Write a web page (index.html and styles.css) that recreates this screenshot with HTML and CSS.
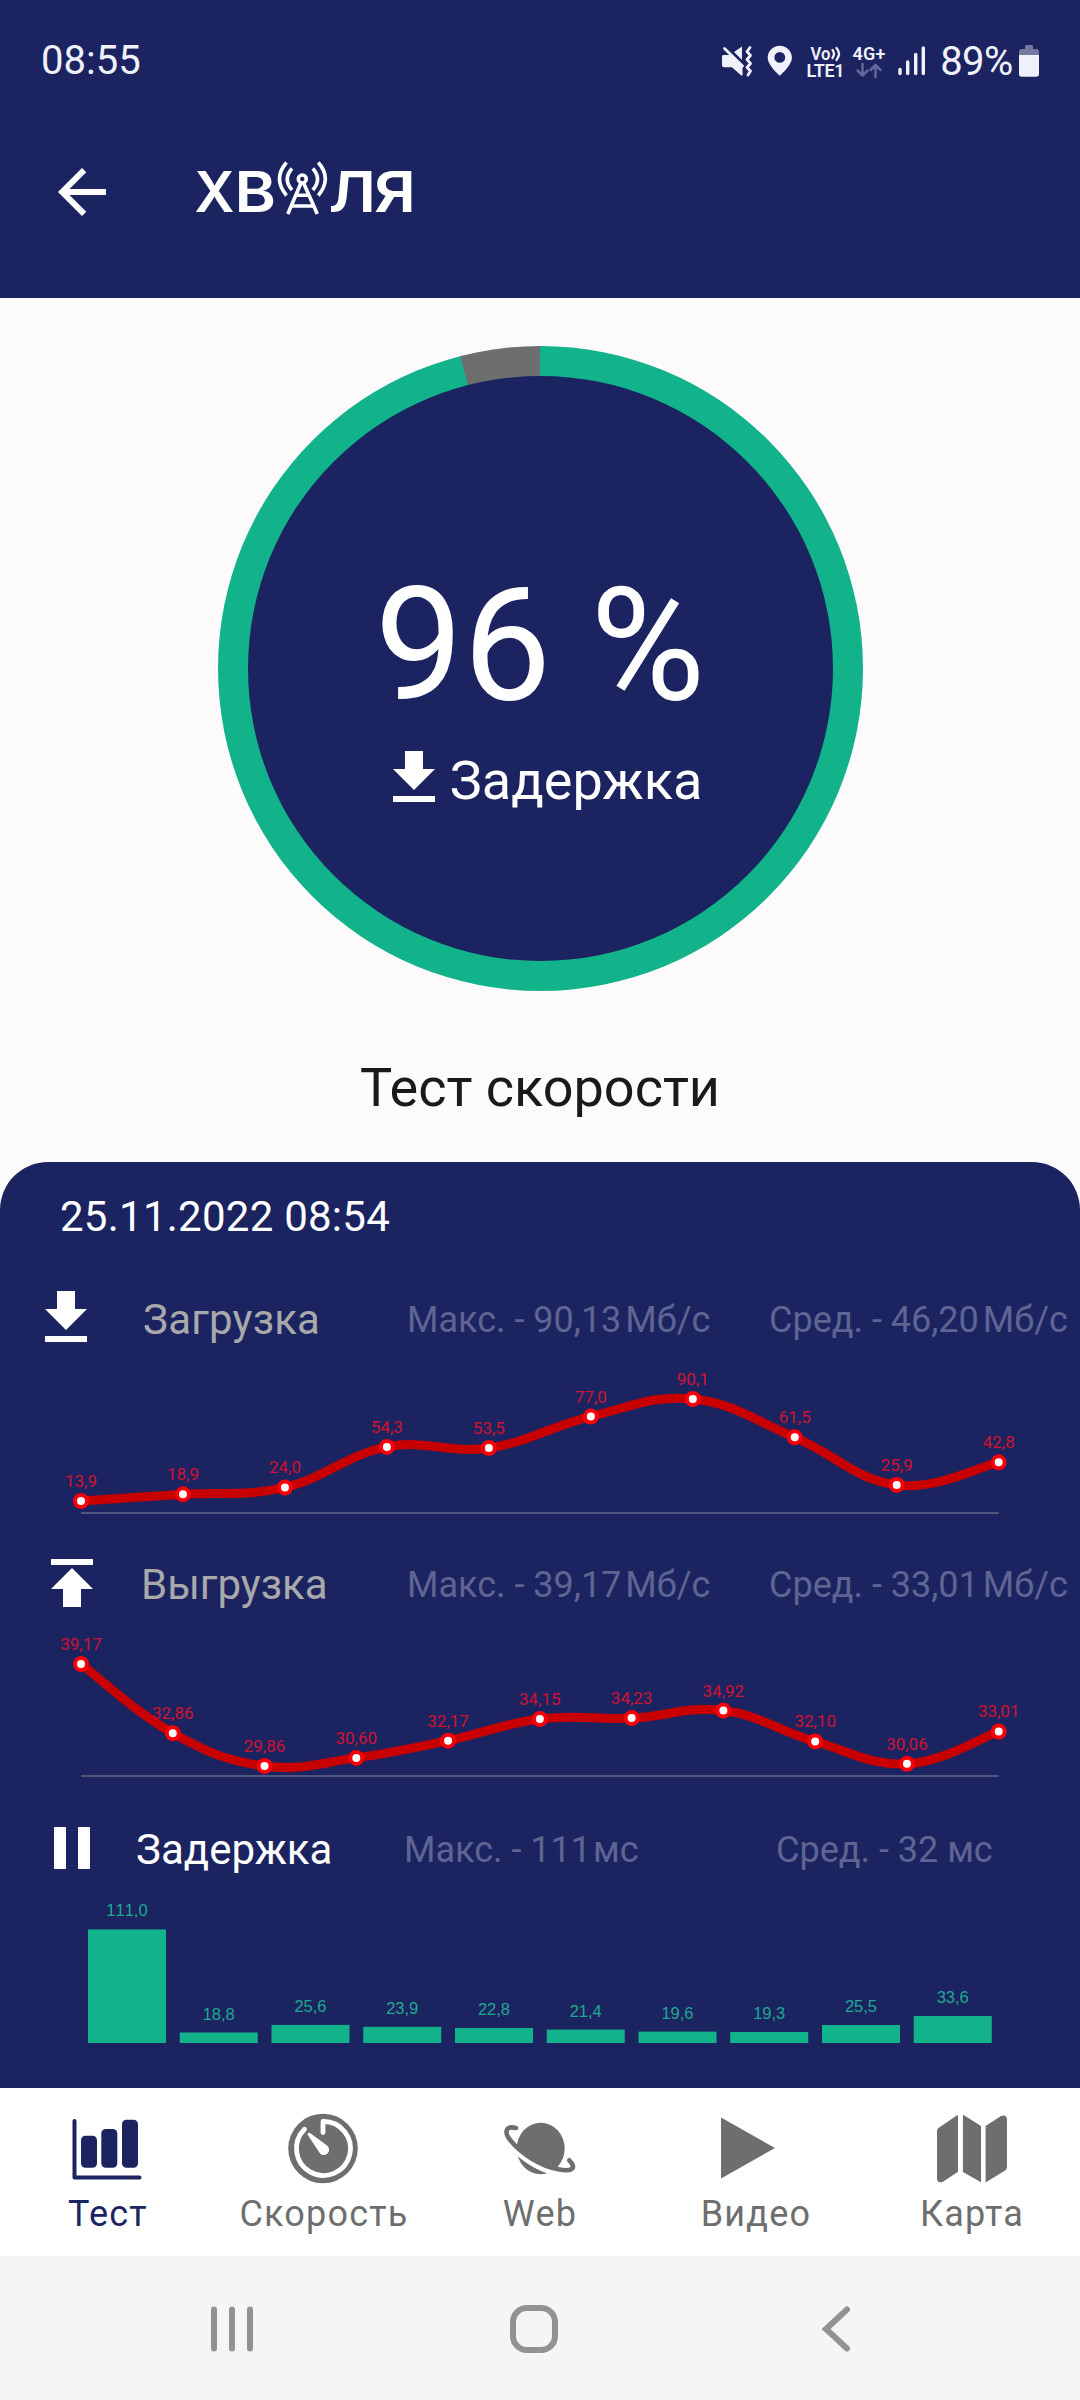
FILE: index.html
```html
<!DOCTYPE html>
<html lang="ru">
<head>
    <meta charset="UTF-8">
    <title>Хваля - Тест скорости</title>
    <link rel="stylesheet" href="styles.css">
</head>
<body>
    <header>
        <div class="status-bar">
            <span class="clock">08:55</span>
            <svg class="status-icons" viewBox="716 34 330 54" width="330" height="54">
                <!-- sound off -->
                <path d="M722 57q0-2 2-2h3l16 20v.3l-10-8h-9q-2 0-2-2zM734 52l8-5.500v13.500z" />
                <path d="M722 57v6q0 3 3 3h5.500l10.500 9.300q1.500.7 1.500-1V66l-13-11h-5.500q-2 0-2 2z" />
                <path d="M724.500 48.500l18 17.500" class="line" stroke-width="2.800" />
                <path d="M750 47.500l-3 4 3.500 4-3.500 4 3.500 4-3.500 4 3.500 3.500-2.500 4" class="line" stroke-width="2.800" />
                <!-- location -->
                <path fill-rule="evenodd" d="M779.800 45.700c-6.700 0-12.100 5.200-12.100 11.900 0 8.200 12.100 18.100 12.100 18.100s12.100-9.900 12.100-18.100c0-6.700-5.400-11.900-12.100-11.900zm0 6.300a5.400 5.400 0 1 1 0 10.800a5.400 5.400 0 1 1 0-10.800z" />
                <text x="810.500" y="59.500" class="tiny" textLength="20" lengthAdjust="spacingAndGlyphs">Vo</text>
                <path d="M832.500 50q3 3.500 0 8M836.500 48q5 5.500 0 12" class="line" stroke-width="2.300" />
                <text x="806.500" y="76.500" class="tiny" textLength="38">LTE1</text>
                <text x="852.500" y="60" class="tiny" textLength="33">4G+</text>
                <path d="M862.500 64v11M857.500 70.500l5 5 5-5M875.500 77V65.500M870.500 70l5-5 5 5" class="line dim" stroke-width="2.500" />
                <path d="M900 69.500v4M907.700 62v11.500M915.700 54.500v19M923.300 48v25.500" class="line" stroke-width="3.400" />
                <text x="940.200" y="74.700" class="percent" textLength="73">89%</text>
                <path class="dim-fill" d="M1025 46.500q0-1.500 1.500-1.500h5q1.500 0 1.500 1.500V49h3.500q2.500 0 2.500 2.500V56h-20v-4.500q0-2.500 2.500-2.500h3.500z" />
                <path d="M1019 55h20v19q0 2.700-2.700 2.700h-14.600q-2.700 0-2.700-2.700z" />
            </svg>
        </div>
        <div class="app-bar">
            <svg class="icon" viewBox="0 0 24 24"><path d="M20 11H7.830l5.590-5.590L12 4l-8 8 8 8 1.410-1.410L7.830 13H20v-2z" /></svg>
            <svg class="logo" viewBox="190 156 230 72" width="230" height="72">
                <text x="194.500" y="212" textLength="40" lengthAdjust="spacingAndGlyphs">Х</text>
                <text x="234.500" y="212" textLength="41.500" lengthAdjust="spacingAndGlyphs">В</text>
                <text x="328.500" y="212" textLength="47.500" lengthAdjust="spacingAndGlyphs">Л</text>
                <text x="374" y="212" textLength="42" lengthAdjust="spacingAndGlyphs">Я</text>
                <g class="tower">
                    <circle cx="302.300" cy="179" r="4" />
                    <path d="M300.800 183.500L287.800 214M303.800 183.500L317.300 214M297 195.300h11M291.500 206h22" />
                    <path d="M292 168.500q-9.500 10.500 0 21.500M286.500 162.500q-14 16 0 33M312.800 168.500q9.500 10.500 0 21.500M318.300 162.500q14 16 0 33" />
                </g>
            </svg>
        </div>
    </header>

    <main>
        <div class="gauge">
            <div class="gauge-inner">
                <div class="gauge-value">96 %</div>
                <div class="gauge-label">
                    <svg class="icon" viewBox="0 0 24 24"><path d="M19 9h-4V3H9v6H5l7 7 7-7zM5 18v2h14v-2H5z" /></svg>
                    <span>Задержка</span>
                </div>
            </div>
        </div>
        <h1>Тест скорости</h1>
    </main>

    <section class="results">
        <div class="date">25.11.2022 08:54</div>

        <div class="row download">
            <svg class="icon" viewBox="0 0 24 24"><path d="M19 9h-4V3H9v6H5l7 7 7-7zM5 18v2h14v-2H5z" /></svg>
            <span class="name">Загрузка</span>
            <span class="stat">Макс. - 90,13<span class="unit">Мб/с</span></span>
            <span class="stat">Сред. - 46,20<span class="unit">Мб/с</span></span>
        </div>
        <svg class="chart" id="downloadChart" width="1080" height="193"></svg>

        <div class="row upload">
            <svg class="icon" viewBox="0 0 24 24"><path d="M5 4v2h14V4H5zm0 10h4v6h6v-6h4l-7-7-7 7z" /></svg>
            <span class="name">Выгрузка</span>
            <span class="stat">Макс. - 39,17<span class="unit">Мб/с</span></span>
            <span class="stat">Сред. - 33,01<span class="unit">Мб/с</span></span>
        </div>
        <svg class="chart" id="uploadChart" width="1080" height="193"></svg>

        <div class="row delay">
            <svg class="icon" viewBox="0 0 24 24"><path d="M6 19h4V5H6v14zm8-14v14h4V5h-4z" /></svg>
            <span class="name">Задержка</span>
            <span class="stat">Макс. - 111<span class="unit">мс</span></span>
            <span class="stat">Сред. - 32 мс</span>
        </div>
        <svg class="chart" id="delayChart" width="1080" height="204"></svg>
    </section>

    <nav class="tabs">
        <a class="tab active">
            <svg viewBox="0 0 72 72" width="72" height="72">
                <path d="M2.500 9v56.500h65" fill="none" stroke="currentColor" stroke-width="4" stroke-linecap="round" stroke-linejoin="round" />
                <rect x="9" y="23.700" width="16" height="32" rx="4.500" />
                <rect x="29.300" y="17" width="16" height="38.700" rx="4.500" />
                <rect x="50" y="7.700" width="16" height="48" rx="4.500" />
            </svg>
            <span>Тест</span>
        </a>
        <a class="tab">
            <svg viewBox="0 0 72 72" width="72" height="72">
                <circle cx="35" cy="36.500" r="34.800" />
                <path d="M35 20.500V9.500a27 27 0 1 1-18.500 7.800" fill="none" stroke="#fff" stroke-width="4.800" stroke-linecap="round" stroke-linejoin="round" />
                <path d="M19.500 22.500q0-2.500 2.500-1.500l17 12.500a5.300 5.300 0 1 1-8 6.500z" fill="#fff" />
            </svg>
            <span>Скорость</span>
        </a>
        <a class="tab">
            <svg viewBox="0 0 72 72" width="72" height="72">
                <ellipse cx="36.700" cy="36.500" rx="24" ry="25.800" />
                <path d="M8 35.500C20 48 35 57 52 61.500" fill="none" stroke="#fff" stroke-width="5" />
                <path d="M12 16C1 13.300 0 20.700 6.700 28.700C16 40.700 36 54 54.300 57.300C67.700 60 73.300 56.300 65.300 48.300" fill="none" stroke="currentColor" stroke-width="4.600" stroke-linecap="round" />
            </svg>
            <span>Web</span>
        </a>
        <a class="tab">
            <svg viewBox="0 0 72 72" width="72" height="72"><path d="M1 5.500L55 36L1 66.500z" /></svg>
            <span>Видео</span>
        </a>
        <a class="tab">
            <svg viewBox="0 0 72 72" width="72" height="72">
                <path d="M1 19q0-2 1.500-3L20 4q2-1.500 2 .5v55.200L7 69.800q-6 2-6-3.800z" />
                <path d="M26.900 4q0-1.500 1.500-.5L45 14v56.200L26.900 60z" />
                <path d="M49.600 14L65 4q6-2 6 4v47q0 2-2 3.500L49.600 70.500z" />
            </svg>
            <span>Карта</span>
        </a>
    </nav>

    <footer>
        <svg viewBox="0 0 54 54" width="54" height="54"><path d="M9 7.500v39M27 7.500v39M45 7.500v39" /></svg>
        <svg viewBox="0 0 54 54" width="54" height="54"><rect x="6" y="6" width="42" height="42" rx="14" /></svg>
        <svg viewBox="0 0 54 54" width="54" height="54"><path d="M38 7.500L17 27L38 46.500" /></svg>
    </footer>

    <script src="charts.js"></script>
</body>
</html>
```

FILE: styles.css
```css
body {
    margin: 0;
    width: 1080px;
    font-family: Roboto, sans-serif;
    background: #fcfafb;
    color: #fff;
}
.icon {
    width: 72px;
    height: 72px;
    fill: #fff;
    flex: none;
}
header {
    height: 298px;
    background: #1b2461;
}
.status-bar {
    display: flex;
    justify-content: space-between;
    align-items: center;
    height: 121px;
    padding: 0 34px 0 41px;
}
.clock {
    font-size: 40px;
    color: #f0f1fa;
}
.status-icons {
    fill: #f0f1fa;
}
.status-icons .line {
    fill: none;
    stroke: #f0f1fa;
    stroke-linecap: round;
    stroke-linejoin: round;
}
.status-icons .dim {
    stroke: #62689a;
}
.status-icons .dim-fill {
    fill: #7479a4;
}
.tiny {
    font-size: 18px;
    font-weight: 600;
}
.percent {
    font-size: 40px;
}
.app-bar {
    display: flex;
    gap: 72px;
    padding: 35px 46px;
}
.logo text {
    font-family: Inter, sans-serif;
    font-size: 56px;
    font-weight: 600;
    fill: #fff;
}
.tower {
    fill: none;
    stroke: #fff;
    stroke-width: 3.600;
}
main {
    display: flex;
    flex-direction: column;
    align-items: center;
    box-sizing: border-box;
    height: 864px;
    padding-top: 48px;
}
.gauge {
    box-sizing: border-box;
    width: 645px;
    height: 645px;
    padding: 30px;
    border-radius: 50%;
    background: conic-gradient(#12b28a 0 96%, #6e6e6e 96% 100%);
}
.gauge-inner {
    display: flex;
    flex-direction: column;
    align-items: center;
    box-sizing: border-box;
    height: 585px;
    padding-top: 191px;
    border-radius: 50%;
    background: #1b2461;
}
.gauge-value {
    font-size: 157px;
    line-height: 157px;
}
.gauge-label {
    display: flex;
    align-items: center;
    margin-top: 17px;
    font-size: 54px;
    line-height: 66px;
}
.gauge-label span {
    padding-top: 7px;
}
h1 {
    margin: 65px 0 0;
    font-size: 54px;
    font-weight: 400;
    line-height: 64px;
    color: #1a1a1c;
}
.results {
    box-sizing: border-box;
    height: 926px;
    padding-top: 30px;
    border-radius: 48px 48px 0 0;
    background: #1b2461;
}
.date {
    height: 90px;
    padding-left: 60px;
    font-size: 42px;
    line-height: 50px;
    letter-spacing: 0.250px;
}
.row {
    display: grid;
    grid-template-columns: 105px 266px 362px 1fr;
    align-items: center;
    height: 72px;
    padding-left: 36px;
    white-space: nowrap;
}
.row.download {
    grid-template-columns: 113px 264px 362px 1fr;
    padding-left: 30px;
}
.row.delay {
    grid-template-columns: 100px 268px 372px 1fr;
}
.name {
    padding-top: 3px;
    font-size: 42px;
    color: #a9a9ab;
}
.download .name {
    letter-spacing: 0.200px;
}
.delay .name {
    color: #fff;
}
.stat {
    padding-top: 4px;
    font-size: 36px;
    color: #5f6592;
}
.unit {
    margin-left: 4px;
}
.delay .unit {
    margin-left: 2px;
}
.chart {
    display: block;
}
.axis {
    stroke: #51567f;
    stroke-width: 2;
}
.curve {
    fill: none;
    stroke: #c80000;
    stroke-width: 9;
}
.dot {
    fill: #fff;
    stroke: #f8000a;
    stroke-width: 4;
}
.value {
    font-size: 17px;
    text-anchor: middle;
    fill: #cf1230;
}
.bar {
    fill: #12b28a;
}
.bar-value {
    font-family: "Liberation Sans", Arial, sans-serif;
    font-size: 16.500px;
    font-kerning: none;
    text-anchor: middle;
    fill: #1faa8f;
}
.tabs {
    display: grid;
    grid-template-columns: repeat(5, 1fr);
    height: 168px;
    background: #fff;
}
.tab {
    display: flex;
    flex-direction: column;
    align-items: center;
    padding-top: 24px;
    font-size: 36px;
    line-height: 42px;
    letter-spacing: 1.200px;
    color: #6e6e6e;
    fill: currentColor;
}
.tab.active {
    color: #1b2461;
}
.tab span {
    margin-top: 9px;
}
footer {
    display: flex;
    gap: 248px;
    box-sizing: border-box;
    height: 144px;
    padding: 46px 0 0 205px;
    background: #f5f5f5;
}
footer svg {
    fill: none;
    stroke: #929292;
    stroke-width: 6;
    stroke-linecap: round;
}
```

FILE: charts.js
```js
var NS = 'http://www.w3.org/2000/svg';
var LEFT = 81;
var RIGHT = 998.7;

function add(svg, tag, attrs, text) {
    var el = document.createElementNS(NS, tag);
    for (var key in attrs) {
        el.setAttribute(key, attrs[key]);
    }
    if (text) {
        el.textContent = text;
    }
    svg.appendChild(el);
}

function format(value, digits) {
    return value.toFixed(digits).replace('.', ',');
}

function lineChart(id, values, digits, axisY) {
    var svg = document.getElementById(id);
    var min = Math.min.apply(null, values);
    var max = Math.max.apply(null, values);
    var step = (RIGHT - LEFT) / (values.length - 1);
    var points = values.map(function (v, i) {
        return { x: LEFT + i * step, y: 147 - (v - min) / (max - min) * 102 };
    });

    // smooth curve, control points follow the neighbours
    var k = 0.2;
    var d = 'M' + points[0].x + ' ' + points[0].y;
    for (var i = 1; i < points.length; i++) {
        var before = points[i - 2] || points[i - 1];
        var prev = points[i - 1];
        var cur = points[i];
        var next = points[i + 1] || cur;
        d += ' C' + [
            prev.x + (cur.x - before.x) * k, prev.y + (cur.y - before.y) * k,
            cur.x - (next.x - prev.x) * k, cur.y - (next.y - prev.y) * k,
            cur.x, cur.y
        ].join(' ');
    }

    add(svg, 'line', { 'class': 'axis', x1: LEFT, x2: RIGHT, y1: axisY, y2: axisY });
    add(svg, 'path', { 'class': 'curve', d: d });
    points.forEach(function (p, i) {
        add(svg, 'text', { 'class': 'value', x: p.x, y: p.y - 14 }, format(values[i], digits));
        add(svg, 'circle', { 'class': 'dot', cx: p.x, cy: p.y, r: 6 });
    });
}

function barChart(id, values) {
    var svg = document.getElementById(id);
    var min = Math.min.apply(null, values);
    values.forEach(function (v, i) {
        var height = 10.5 + (v - min) * 1.118;
        var x = 88 + i * 91.75;
        add(svg, 'rect', { 'class': 'bar', x: x, y: 159 - height, width: 78, height: height });
        add(svg, 'text', { 'class': 'bar-value', x: x + 39, y: 146 - height }, format(v, 1));
    });
}

lineChart('downloadChart', [13.9, 18.9, 24.0, 54.3, 53.5, 77.0, 90.1, 61.5, 25.9, 42.8], 1, 159);
lineChart('uploadChart', [39.17, 32.86, 29.86, 30.60, 32.17, 34.15, 34.23, 34.92, 32.10, 30.06, 33.01], 2, 157);
barChart('delayChart', [111.0, 18.8, 25.6, 23.9, 22.8, 21.4, 19.6, 19.3, 25.5, 33.6]);
```
